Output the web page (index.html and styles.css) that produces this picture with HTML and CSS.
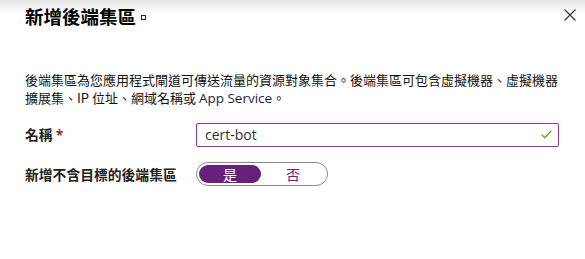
FILE: index.html
```html
<html>
<head>
  <title>新增後端集區</title>
  <link rel="stylesheet" href="styles.css">
</head>
<body>
  <section class="blade">
    <header class="blade-header">
      <h1 class="blade-title">新增後端集區<span class="dirty-mark"></span></h1>
      <button class="close" aria-label="關閉">
        <svg width="12" height="12" viewBox="0 0 12 12"><path d="M0.5 0.5 L11.5 11.5 M11.5 0.5 L0.5 11.5" stroke="#323130" stroke-width="1.1" fill="none"/></svg>
      </button>
    </header>
    <p class="intro">後端集區為您應用程式閘道可傳送流量的資源對象集合。後端集區可包含虛擬機器、虛擬機器<br>擴展集、IP 位址、網域名稱或 <span class="latin">App Service</span>。</p>
    <div class="form">
      <label class="field-label">名稱 <span class="req">*</span></label>
      <div class="textbox">
        <span class="value">cert-bot</span>
        <svg class="check" width="11" height="9" viewBox="0 0 11 9"><path d="M0.7 4.6 L3.8 7.6 L10.3 0.8" stroke="#57a300" stroke-width="1.3" fill="none"/></svg>
      </div>
      <label class="field-label">新增不含目標的後端集區</label>
      <div class="toggle">
        <span class="opt on">是</span>
        <span class="opt">否</span>
      </div>
    </div>
  </section>
</body>
</html>
```

FILE: styles.css
```css
body {
  margin: 0;
  background: #fff;
  color: #000;
  font-family: "Noto Sans", "Noto Sans CJK TC", sans-serif;
}
.blade-header {
  display: flex;
  justify-content: space-between;
  height: 50px;
  background: linear-gradient(#e2e2e2 0, #f6f6f6 8px, #fff 16px);
}
.blade-title {
  margin: 0;
  padding: 1px 0 0 25px;
  font: bold 18.5px/30px "Noto Sans CJK TC", sans-serif;
  color: #000;
}
.dirty-mark {
  display: inline-block;
  width: 3px;
  height: 3px;
  border: 1.5px solid #222;
  margin-left: 5px;
  vertical-align: 4px;
}
.close {
  border: none;
  background: none;
  padding: 0;
  margin: 9px 9px 0 0;
  width: 12px;
  height: 12px;
  display: flex;
}
.intro {
  margin: 21px 0 0;
  padding: 0 10px 0 25px;
  font: 13px/18px "Noto Sans CJK TC", sans-serif;
  color: #111;
}
.latin {
  font-family: "Open Sans", "Noto Sans", sans-serif;
  font-size: 13.5px;
  color: #1c1c4a;
}
.form {
  display: grid;
  grid-template-columns: 171px 363px;
  row-gap: 15px;
  padding-left: 25px;
  margin-top: 15px;
  align-items: center;
}
.field-label {
  font: bold 13.8px/24px "Noto Sans CJK TC", sans-serif;
  color: #222;
}
.req {
  color: #a4262c;
  font-family: "Noto Sans", sans-serif;
}
.textbox {
  box-sizing: border-box;
  height: 24px;
  border: 1px solid #8e36aa;
  border-radius: 2px;
  display: flex;
  align-items: center;
  justify-content: space-between;
  padding: 0 6px 0 8px;
}
.value {
  font: 14px/20px "Open Sans", "Noto Sans", sans-serif;
  color: #323130;
}
.toggle {
  box-sizing: border-box;
  width: 132px;
  height: 24px;
  border: 1px solid #8a8886;
  border-radius: 12px;
  padding: 2px;
  display: grid;
  grid-template-columns: 62px 1fr;
}
.opt {
  display: flex;
  align-items: center;
  justify-content: center;
  border-radius: 9px;
  font: 14px/18px "Noto Sans CJK TC", sans-serif;
  color: #68217a;
}
.opt.on {
  background: #68217a;
  color: #fff;
}
```
